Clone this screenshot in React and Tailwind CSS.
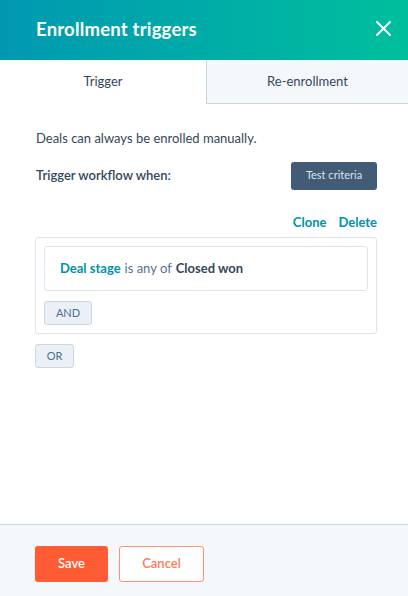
export default function App() {
  return (
    <div className="w-[408px] h-[596px] flex flex-col bg-white text-[#33475b] font-['Lato',sans-serif] overflow-hidden">
      {/* Header */}
      <div className="h-[60px] shrink-0 flex items-center justify-between pl-9 pr-[17px] bg-gradient-to-r from-[#0098b1] to-[#00bf9c]">
        <h1 className="text-[18.5px] font-bold text-white tracking-[0.2px]">Enrollment triggers</h1>
        <svg width="15" height="15" viewBox="0 0 15 15" className="mb-[4px]">
          <path d="M1 1L14 14M14 1L1 14" stroke="white" strokeWidth="2" strokeLinecap="round" />
        </svg>
      </div>

      {/* Tabs */}
      <div className="h-[44px] shrink-0 flex text-[13px]">
        <div className="w-[206px] flex items-center justify-center bg-white">Trigger</div>
        <div className="flex-1 flex items-center justify-center bg-[#f5f8fa] border-l border-b border-[#cbd6e2]">
          Re-enrollment
        </div>
      </div>

      {/* Body */}
      <div className="flex-1 pl-[35px] pr-[31px] pt-[25px]">
        <p className="text-[13px] pl-px">Deals can always be enrolled manually.</p>
        <div className="mt-[13px] flex items-center justify-between">
          <span className="text-[13px] font-semibold pl-px">Trigger workflow when:</span>
          <button className="w-[86px] h-[28px] rounded-[3px] bg-[#425b76] text-[11px] text-[#dfe3eb]">
            Test criteria
          </button>
        </div>
        <div className="mt-[23px] flex justify-end gap-[12px] text-[13px] font-bold text-[#0091ae]">
          <span>Clone</span>
          <span>Delete</span>
        </div>
        <div className="mt-[5px] border border-[#dfe3eb] rounded-[3px] p-[8px]">
          <div className="h-[45px] border border-[#dfe3eb] rounded-[3px] flex items-center px-[15px] text-[13px]">
            <span className="font-bold text-[#0091ae]">Deal stage</span>
            <span className="ml-[4px] text-[#516f90]">is any of</span>
            <span className="ml-[4px] font-bold">Closed won</span>
          </div>
          <button className="mt-[10px] w-[48px] h-[24px] rounded-[3px] bg-[#eaf0f6] border border-[#cbd6e2] text-[11px] text-[#506e91]">
            AND
          </button>
        </div>
        <button className="mt-[10px] w-[39px] h-[24px] rounded-[3px] bg-[#eaf0f6] border border-[#cbd6e2] text-[11px] text-[#506e91]">
          OR
        </button>
      </div>

      {/* Footer */}
      <div className="h-[72px] shrink-0 border-t border-[#cbd6e2] bg-[#f5f8fa] flex items-start gap-[11px] px-[35px] pt-[21px]">
        <button className="w-[73px] h-[36px] rounded-[3px] bg-[#ff5c35] text-white text-[13px] font-semibold">
          Save
        </button>
        <button className="w-[85px] h-[36px] rounded-[3px] bg-white border border-[#ff8f73] text-[#ff7a59] text-[13px] font-semibold">
          Cancel
        </button>
      </div>
    </div>
  )
}
